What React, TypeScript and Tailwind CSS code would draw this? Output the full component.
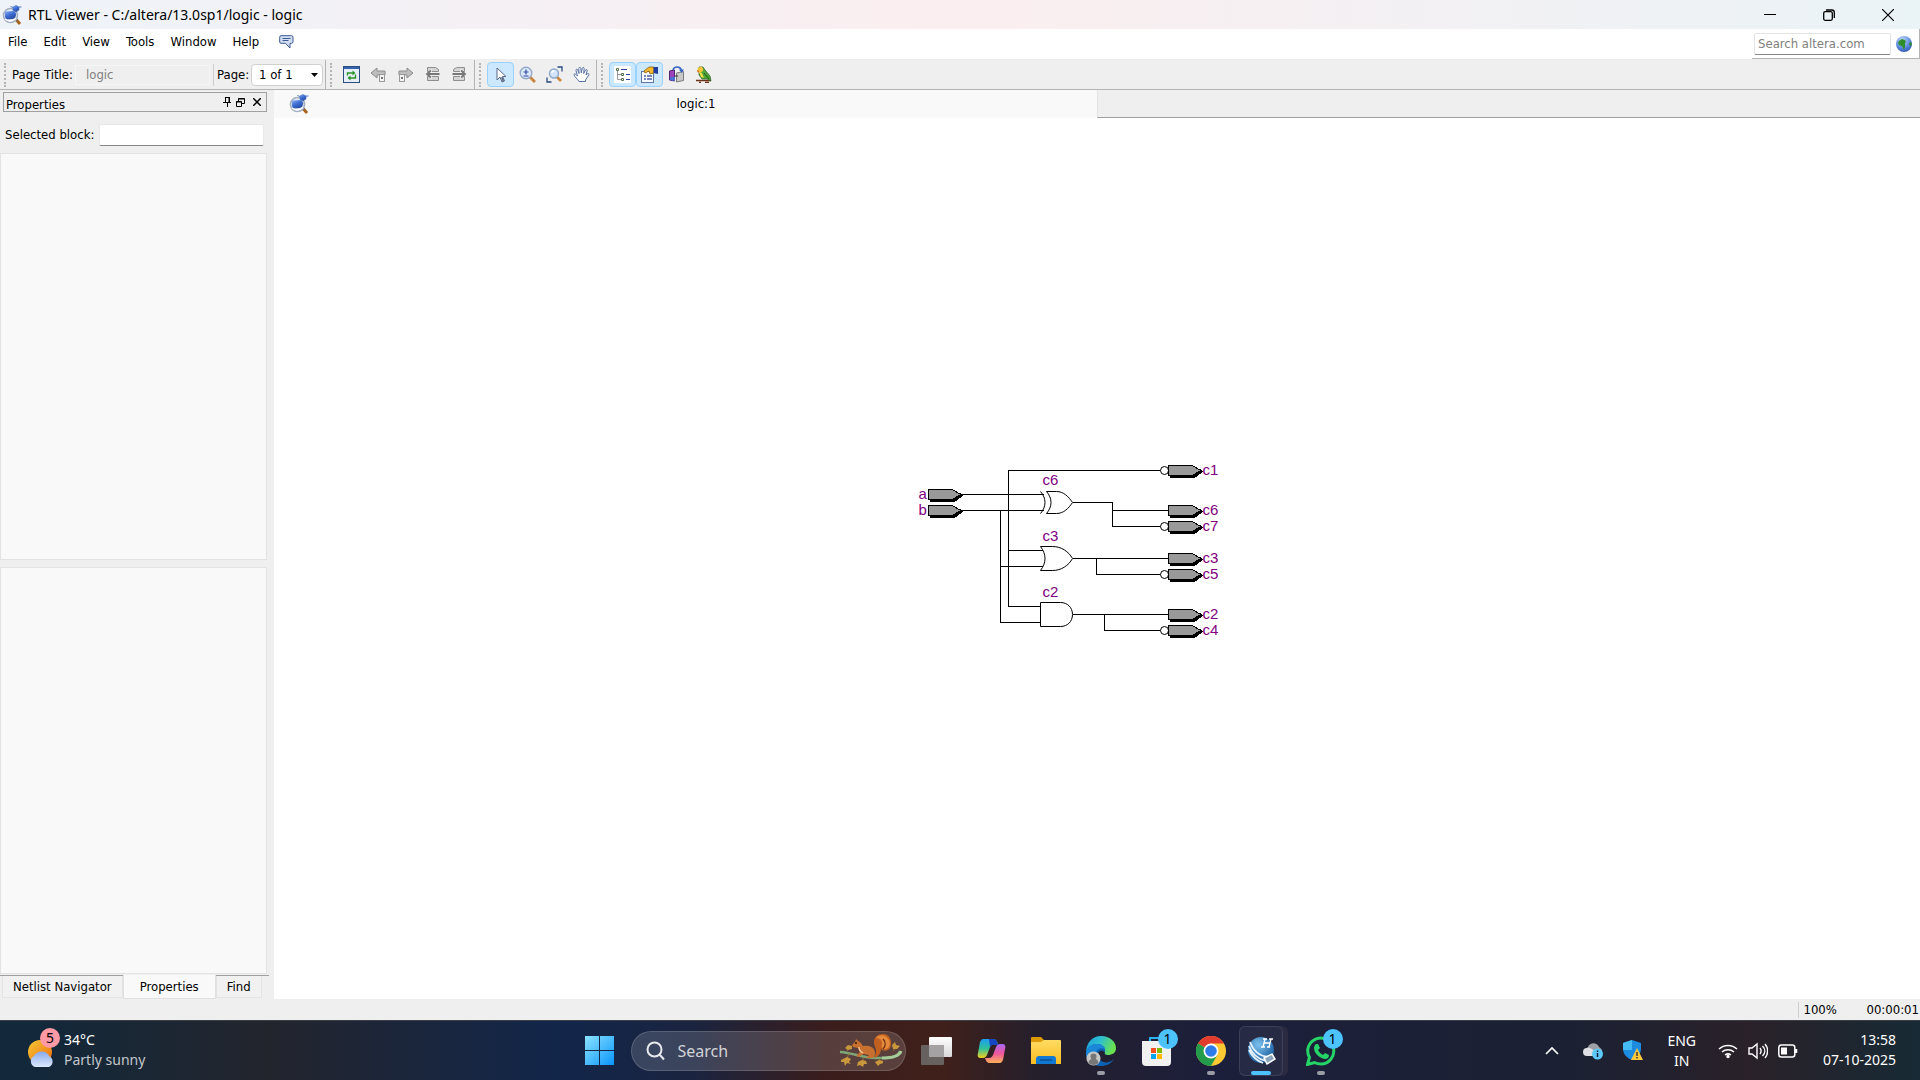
import React from "react";

type P = { children?: React.ReactNode; className?: string };

function AppLogo({ className }: P) {
  return (
    <svg className={className} width="20" height="20" viewBox="0 0 20 20" aria-hidden="true">
      <defs>
        <linearGradient id="logoBody" x2=".6" y2="1">
          <stop stopColor="#8fb4f5" />
          <stop offset=".5" stopColor="#3f6fd6" />
          <stop offset="1" stopColor="#274a9e" />
        </linearGradient>
      </defs>
      <path d="M14.500 15l3.500 4" stroke="#a8641e" strokeWidth="3" />
      <path d="M13.500 14l1.500 1.500" stroke="#5a5f6a" strokeWidth="2.600" />
      <circle cx="8.500" cy="10.500" r="7" fill="#e3ebf5" stroke="#a3afc0" strokeWidth="1.600" />
      <path d="M3 6.500l8-.5q3 .5 3 3.500t-3 4.500l-6 .500q-2-.5-2-3z" fill="url(#logoBody)" />
      <path d="M3 14q5 4 11-.5" fill="none" stroke="#fff" strokeWidth="1.500" />
      <path d="M11 2l3-1.500L17 2v3l-3 2-3-1.500z" fill="url(#logoBody)" stroke="#3f66b8" strokeWidth=".6" />
      <path d="M8.500 1.500l2.500 1M17 2h2.500" stroke="#4f79cc" />
    </svg>
  );
}

function Globe() {
  return (
    <svg width="16" height="16" viewBox="0 0 16 16" aria-hidden="true">
      <defs>
        <radialGradient id="globe" cx=".4" cy=".25" r=".8">
          <stop offset="0" stopColor="#c3d8fb" />
          <stop offset=".6" stopColor="#5e8be0" />
          <stop offset="1" stopColor="#2d55b0" />
        </radialGradient>
      </defs>
      <circle cx="8" cy="8" r="8" fill="url(#globe)" />
      <path d="M3 5l3-2 3 1 1 2-1 1v4l-1 3-2-4-3-1-1-2zM13 7l2-1 1 3-2 1z" fill="#2f8d2c" />
    </svg>
  );
}

function Grip() {
  return <span className="mx-1 h-6 w-0.5 shrink-0 border-l-2 border-dotted border-[#b4b4b4]" />;
}

function ToolButton({ children, label, active }: { children: React.ReactNode; label: string; active?: boolean }) {
  return (
    <button
      aria-label={label}
      aria-pressed={active}
      className={
        active
          ? "flex h-[25px] w-[27px] items-center justify-center rounded-sm border border-[#99d1ff] bg-[#cce8ff]"
          : "flex h-[25px] w-[27px] items-center justify-center"
      }
    >
      {children}
    </button>
  );
}

function Svg({ children }: P) {
  return (
    <svg width="17" height="17" viewBox="0 0 17 17" fill="none" aria-hidden="true">
      {children}
    </svg>
  );
}

function RefreshIcon() {
  return (
    <Svg>
      <rect x=".5" y=".5" width="16" height="16" fill="#e6eefa" stroke="#2c4d80" />
      <path d="M1 1h15v2H1z" fill="#3563ae" />
      <path d="M4.500 9.500V7H10M12.500 8.500V12H7" stroke="#2c9426" strokeWidth="1.400" />
      <path d="M9.500 4.500l3 2.500-3 2.500zM7.500 9.500l-3 2.500 3 2.500z" fill="#2c9426" />
    </Svg>
  );
}

function HierArrow({ right }: { right?: boolean }) {
  return (
    <Svg>
      <g transform={right ? "translate(17 0) scale(-1 1)" : undefined}>
        <path d="M1 7l6-5v3h8v4H7v3z" fill="#bdbdbd" stroke="#8c8c8c" />
        <rect x="9.500" y="8.500" width="5" height="7" fill="#f3f3f3" stroke="#9a9a9a" />
        <path d="M11 11h2v2h-2z" fill="#777" />
      </g>
    </Svg>
  );
}

function PageArrow({ right }: { right?: boolean }) {
  return (
    <Svg>
      <g transform={right ? "translate(17 0) scale(-1 1)" : undefined}>
        <path d="M3.500 1.500h8l3 2v2h-11zM3.500 10.500h11v4h-11z" fill="#d4d4d4" stroke="#8f8f8f" />
        <path d="M7 3.500v9" stroke="#f5f5f5" strokeWidth="2" />
        <path d="M15.500 8H3M7 4.500L3 8l4 3.500" stroke="#787878" strokeWidth="1.800" />
      </g>
    </Svg>
  );
}

function PointerIcon() {
  return (
    <Svg>
      <path d="M5 2v12l3-3 2 5 2.500-1-2-4.500H14z" fill="#fff" stroke="#5b6884" strokeWidth="1" />
      <path d="M9 11.500l1.500 4 1.500-.700-1.500-4" fill="#5d6a86" />
    </Svg>
  );
}

function ZoomIcon() {
  return (
    <Svg>
      <path d="M11 11l5 5" stroke="#c98642" strokeWidth="3" />
      <circle cx="7" cy="7" r="5.800" fill="#dce9fb" stroke="#93a9c9" strokeWidth="1.400" />
      <path d="M4.500 6h5M7 3.500v5M4.500 10h5" stroke="#2a4aa4" strokeWidth="1.200" />
    </Svg>
  );
}

function FitIcon() {
  return (
    <Svg>
      <path d="M11.500 1H16v4.500M1 11.500V16h4.500" stroke="#274a80" strokeWidth="1.300" />
      <path d="M11 11l4 4" stroke="#c98642" strokeWidth="2.600" />
      <circle cx="8" cy="7.500" r="4.500" fill="#d3e4fa" stroke="#8da6c9" strokeWidth="1.400" />
      <path d="M5.500 7a3 3 0 013-2" stroke="#fff" strokeWidth="1.400" />
    </Svg>
  );
}

function HandIcon() {
  return (
    <Svg>
      <path
        d="M6 15.500C4.500 13 2 11 1 9c-.4-1 1-1.500 2-.5L4.500 10 3 4.500C2.800 3 4.300 2.800 4.700 4L6 7.500 5.800 2.500c0-1.500 1.800-1.500 2 0L8.300 7l1-4.800c.4-1.200 2-.9 1.800.5L10.700 7.500 12.500 4c.6-1 2-.5 1.600.8L13 9l1.600-1.300c1-.6 1.800.3 1.200 1.200L12.500 14v1.500z"
        fill="#fff"
        stroke="#5871a4"
        strokeWidth="1"
      />
    </Svg>
  );
}

function TreeIcon() {
  return (
    <Svg>
      <path d="M0 0h17v17H0z" fill="#fff" />
      <path d="M3.500 5v8.500H8M3.500 8.500H8" stroke="#999" />
      <path d="M2.500 2.500h2v2h-2zM7.500 7.500h2v2h-2zM7.500 12.500h2v2h-2z" fill="#fff" stroke="#55704c" />
      <path d="M7 3.500h6M12 8.500h4M12 13.500h4" stroke="#2b3fa0" />
    </Svg>
  );
}

function PropsIcon() {
  return (
    <Svg>
      <rect x=".5" y="5.500" width="12" height="11" fill="#f5f8fd" stroke="#6077a6" />
      <path d="M3 10h2M6 10h5M3 13h2M6 13h5" stroke="#4c62a8" strokeWidth="1.300" />
      <path d="M3 5l5-4h5v6L9 8 8 5 4 7z" fill="#f8b92d" stroke="#86600d" strokeWidth=".8" />
      <path d="M12.500 1H17v7l-4.500-1z" fill="#1e3d9e" />
    </Svg>
  );
}

function NetlistIcon() {
  return (
    <Svg>
      <path d="M1.500 5l5-1v11l-5-1z" fill="#9a45bd" stroke="#51226f" />
      <path d="M2 11h5v4l-5-1z" fill="#4d6cd4" />
      <path d="M8.500 7l7-1.500v9l-7 1.500z" fill="#c8c8c8" stroke="#7c7c7c" />
      <path d="M5 4c1-4 7-4 8.500 0" stroke="#3565c2" strokeWidth="1.500" />
      <path d="M11 3.500h5L13.500 7z" fill="#3565c2" />
      <path d="M7 10h3" stroke="#333" />
    </Svg>
  );
}

function BirdIcon() {
  return (
    <Svg>
      <path d="M1 14.500h15M4 16.500h2M10 16.500h4" stroke="#6d3018" strokeWidth="1.300" />
      <path d="M4 1h4l2 3 5 6 1 5-4-2-5 0-3-4z" fill="#4fa53a" stroke="#27601c" strokeWidth=".7" />
      <path d="M3 2l3-1.500L8 2v3L5 7 2 5z" fill="#f2c53b" />
      <path d="M4 6l3 1 2 5-3-1z" fill="#eadb47" />
      <path d="M2 4l2 1-1 2z" fill="#d2531c" />
      <path d="M9 7l5 6" stroke="#1f5118" />
    </Svg>
  );
}

function TabButton({ children, active }: { children: string; active?: boolean }) {
  return (
    <button
      role="tab"
      aria-selected={!!active}
      className={
        active
          ? "-mt-px h-6 border border-t-0 border-[#e0e0e0] bg-[#f9f9f9] px-4"
          : "h-[22px] border border-t-0 border-[#e3e3e3] bg-[#f1f1f1] px-2.5"
      }
    >
      {children}
    </button>
  );
}

/* Netlist schematic */

const outputs = [
  { name: "c1", y: 470, inv: true },
  { name: "c6", y: 510, inv: false },
  { name: "c7", y: 526, inv: true },
  { name: "c3", y: 558, inv: false },
  { name: "c5", y: 574, inv: true },
  { name: "c2", y: 614, inv: false },
  { name: "c4", y: 630, inv: true },
];

function Pin({ x, y }: { x: number; y: number }) {
  return (
    <g>
      <path d={`M${x + 2} ${y + 7}h24l8 -6l-2 -2l-8 6H${x + 2}z`} fill="#000" stroke="#000" />
      <path d={`M${x} ${y - 5}h24l8 5l-8 5h-24z`} fill="#999" stroke="#000" />
    </g>
  );
}

function Schematic() {
  return (
    <svg
      width="394"
      height="217"
      viewBox="899.500 449.500 394 217"
      fill="none"
      stroke="#000"
      shapeRendering="crispEdges"
      role="img"
      aria-label="Schematic of logic"
      className="shrink-0"
    >
      <path d="M960 494h83M960 510h83M1160 470H1008v136h32M1000 510v112h40M1008 550h34M1000 566h42" />
      <path d="M1072 502h40v24h48M1112 510h56M1072 558h96M1096 558v16h64M1072 614h96M1104 614v16h56" />
      <g shapeRendering="auto" fill="#fff">
        <path d="M1046 491h10c7 0 12 5 16 11c-4 6-9 11-16 11h-10c6-7 6-15 0-22z" />
        <path d="M1040 491c6 7 6 15 0 22" fill="none" />
        <path d="M1040 546h12c9 0 16 5 20 12c-4 7-11 12-20 12h-12c6-8 6-16 0-24z" />
        <path d="M1040 602h20c7 0 12 5 12 12s-5 12-12 12h-20z" />
        {outputs.filter((o) => o.inv).map((o) => (
          <circle key={o.name} cx="1164" cy={o.y} r="4" />
        ))}
      </g>
      <Pin x={928} y={494} />
      <Pin x={928} y={510} />
      {outputs.map((o) => (
        <Pin key={o.name} x={1168} y={o.y} />
      ))}
      <g fill="#800080" stroke="none" className="font-['Liberation_Sans',sans-serif] text-[15px]">
        <text x="918" y="498">a</text>
        <text x="918" y="514">b</text>
        <text x="1042" y="484">c6</text>
        <text x="1042" y="540">c3</text>
        <text x="1042" y="596">c2</text>
        {outputs.map((o) => (
          <text key={o.name} x="1202" y={o.y + 4}>
            {o.name}
          </text>
        ))}
      </g>
    </svg>
  );
}

/* Taskbar */

function TaskButton({ children, label, run, badge }: { children: React.ReactNode; label: string; run?: boolean; badge?: string }) {
  return (
    <button aria-label={label} className="relative flex h-12 w-[55px] shrink-0 items-center justify-center">
      {children}
      {run && <span className="absolute bottom-0 h-1 w-2 rounded-full bg-[#9a9ca6]" />}
      {badge && (
        <span className="absolute top-0.5 right-1.5 flex size-5 items-center justify-center rounded-full bg-[#4cc2ff] text-sm text-black">
          {badge}
        </span>
      )}
    </button>
  );
}

function Squirrel() {
  return (
    <svg width="64" height="36" viewBox="0 0 64 36" fill="none" aria-hidden="true">
      <path d="M1 19c14 1 22 6 36 6 12 0 22 0 24-7" stroke="#7fa678" strokeWidth="2.500" />
      <path d="M43 25c9 0 17-1 19-7" stroke="#a5cb98" strokeWidth="3" />
      <path d="M10 20l-3 9M24 24v6M40 26l3 5M55 18v-6M8 18l2-4" stroke="#8b7a3a" />
      <path
        d="M2 27l4-2 2-1 4 2-2 3 2 2-4-1-2 3-1-4-3 0zM19 29l4-2 4 1 1 3-3 0-1 3-3-2-3 1zM36 29l4-2 4 1 0 2-3 1-2 2zM53 12l3-3 1 3 4 1-3 3-4 0zM6 15l3-3 4 1 0 3-4 1z"
        fill="#c9983d"
      />
      <path d="M36 22c3-5-1-8-1-13 0-5 4-8 9-8 7 0 10 8 7 14-3 4-7 3-9 1 0 4-2 7-6 9z" fill="#c2611f" />
      <path d="M37 5c3-4 10-4 13 2 2 5 0 9-4 9-3 0-4-2-3-5 0-4-2-6-6-6z" fill="#e58a3c" />
      <path d="M44 6c3 3 3 7 0 10" stroke="#6d2d10" strokeWidth="1.200" />
      <path d="M13 12l3-3 1-3 2 2c3 1 4 4 5 5 6-1 12 1 12 7 0 3-1 5-3 5h-6l3-3-6-1-4 3-3-1 4-4-2-4-5-1z" fill="#c8702f" />
      <path d="M20 14c0 3 2 5 4 6" stroke="#f0c294" strokeWidth="1.500" />
      <circle cx="17" cy="10" r=".9" fill="#1d0f06" />
    </svg>
  );
}

function Taskbar() {
  return (
    <footer className="flex h-15 items-center border-t border-[#3c4046] bg-[#1c1f3b] font-['Noto_Sans',sans-serif] text-white">
      <div className="flex h-full w-full items-center bg-[linear-gradient(90deg,#13283a_2%,#23252d_14%,#12264a_29%,#1a2440_36%,#3a1d1c_43%,#40201a_49%,#251f2c_54%,#1c1f3b_63%,#1b2133_82%,#2a2129_91%,#172a35_100%)]">
        <button className="flex flex-1 items-center gap-1.5 pl-6 text-left">
          <span className="relative">
            <svg width="34" height="38" viewBox="0 0 34 38" aria-hidden="true">
              <defs>
                <linearGradient id="sun" x2="1" y2="1">
                  <stop stopColor="#f6c934" />
                  <stop offset="1" stopColor="#ee6a10" />
                </linearGradient>
                <linearGradient id="cloud" x2="0" y2="1">
                  <stop stopColor="#87aaee" />
                  <stop offset="1" stopColor="#dce9fc" />
                </linearGradient>
              </defs>
              <circle cx="16" cy="20" r="12" fill="url(#sun)" />
              <path d="M11 35a6 6 0 01-1-11c3-6 13-6 15 0a6 6 0 010 11z" fill="url(#cloud)" />
            </svg>
            <span className="absolute -top-1 left-4 flex size-5 items-center justify-center rounded-full bg-[#ff99a4] text-sm text-black">5</span>
          </span>
          <span className="flex flex-col pb-0.5 text-sm leading-5">
            <span>34°C</span>
            <span className="text-[#c3c6cb]">Partly sunny</span>
          </span>
        </button>

        <div className="flex shrink-0 items-center">
          <TaskButton label="Start">
            <svg width="29" height="29" viewBox="0 0 29 29" aria-hidden="true">
              <defs>
                <linearGradient id="win" x2="1" y2="1">
                  <stop stopColor="#8be3ff" />
                  <stop offset="1" stopColor="#0a95fb" />
                </linearGradient>
              </defs>
              <path d="M0 0h14v14H0zM15 0h14v14H15zM0 15h14v14H0zM15 15h14v14H15z" fill="url(#win)" />
            </svg>
          </TaskButton>
          <label className="ml-1 flex h-10 w-[275px] items-center rounded-full border border-white/15 bg-white/15 pl-3.5 pr-0.5">
            <svg width="20" height="20" viewBox="0 0 20 20" fill="none" stroke="#e8e9ec" strokeWidth="2" aria-hidden="true">
              <circle cx="8.500" cy="8.500" r="7" />
              <path d="M13.500 13.500l4.500 5" />
            </svg>
            <input aria-label="Search" placeholder="Search" className="ml-3 min-w-0 flex-1 bg-transparent text-base text-white outline-none placeholder:text-[#d3d4d8]" />
            <Squirrel />
          </label>
          <span className="w-[3px]" />
          <TaskButton label="Task view">
            <svg width="31" height="28" viewBox="0 0 31 28" aria-hidden="true">
              <defs>
                <linearGradient id="tv" x2="0" y2="1">
                  <stop stopColor="#fff" />
                  <stop offset="1" stopColor="#d8d8d8" />
                </linearGradient>
              </defs>
              <rect x="8" y="0" width="23" height="20" rx="1" fill="url(#tv)" />
              <rect x="0" y="8" width="23" height="20" rx="1" fill="#6f6d6d" fillOpacity=".85" />
              <path d="M8 8h15v12H8z" fill="#a4a2a2" />
            </svg>
          </TaskButton>
          <TaskButton label="Copilot">
            <svg width="29" height="26" viewBox="0 0 29 26" aria-hidden="true">
              <defs>
                <linearGradient id="cp1" x2="0" y2="1">
                  <stop stopColor="#1b9df2" />
                  <stop offset=".5" stopColor="#2fc19a" />
                  <stop offset="1" stopColor="#f4d01c" />
                </linearGradient>
                <linearGradient id="cp2" x2="0" y2="1">
                  <stop stopColor="#a968f4" />
                  <stop offset=".5" stopColor="#f0569a" />
                  <stop offset="1" stopColor="#fbb05b" />
                </linearGradient>
              </defs>
              <path d="M6 1h10c3 0 4 2 5 5h-4c-2 0-3 1-4 3l-3 8c-1 2-2 3-4 3H4c-3 0-4-2-3-5L3 4c1-2 2-3 3-3z" fill="url(#cp1)" />
              <path d="M12 1h4c3 0 4 2 5 6h-4c-2 0-3 0-4 2z" fill="#1746c4" />
              <path d="M23 25H13c-3 0-4-2-5-5h4c2 0 3-1 4-3l3-8c1-2 2-3 4-3h2c3 0 4 2 3 5l-2 11c-1 2-2 3-3 3z" fill="url(#cp2)" />
            </svg>
          </TaskButton>
          <TaskButton label="File Explorer">
            <svg width="30" height="27" viewBox="0 0 30 27" aria-hidden="true">
              <defs>
                <linearGradient id="fe" x2="0" y2="1">
                  <stop stopColor="#ffdc63" />
                  <stop offset="1" stopColor="#f9bc22" />
                </linearGradient>
              </defs>
              <path d="M0 1q0-1 1-1h9l3 3v5H0z" fill="#dc9a08" />
              <path d="M0 5h10l3-2h16q1 0 1 1v23H0z" fill="url(#fe)" />
              <path d="M5 27v-5q0-3 3-3h14q3 0 3 3v5z" fill="#1279d2" />
              <path d="M9 23h12" stroke="#0b4f99" strokeWidth="1.500" />
            </svg>
          </TaskButton>
          <TaskButton label="Edge" run>
            <svg width="30" height="30" viewBox="0 0 30 30" aria-hidden="true">
              <defs>
                <linearGradient id="ed" x2="1" y2=".3">
                  <stop stopColor="#1d9fdd" />
                  <stop offset=".5" stopColor="#2cbfd0" />
                  <stop offset="1" stopColor="#69e052" />
                </linearGradient>
              </defs>
              <path d="M15 0c9 0 15 6 15 12 0 5-4 7-8 7-3 0-4-1-3-3 0-4-3-7-8-7-6 0-10 3-11 8C0 7 6 0 15 0z" fill="url(#ed)" />
              <path d="M0 17C1 11 6 8 11 8c5 0 9 3 8 8-6-4-9 2-6 7 4 5 11 4 15 0-3 5-8 7-13 7C7 30 0 25 0 17z" fill="#0e62b4" />
              <path d="M0 17C1 11 6 8 11 8c4 0 7 2 8 5-8-3-13 5-7 16C5 28 0 23 0 17z" fill="#1b87d8" />
              <circle cx="7.500" cy="22.500" r="7" fill="#c7c7c7" />
              <circle cx="7.500" cy="20.500" r="3" fill="#777" />
              <path d="M2.500 27a5 4.500 0 0110 0 7 7 0 01-10 0z" fill="#777" />
            </svg>
          </TaskButton>
          <TaskButton label="Microsoft Store" badge="1">
            <svg width="29" height="30" viewBox="0 0 29 30" aria-hidden="true">
              <path d="M8 7V2h13v5" fill="none" stroke="#28b3ec" strokeWidth="2" />
              <path d="M0 5h29v21q0 4-4 4H4q-4 0-4-4z" fill="#f1f1f1" />
              <path d="M9 12h5v5H9z" fill="#f25022" />
              <path d="M15 12h5v5h-5z" fill="#7fba00" />
              <path d="M9 18h5v5H9z" fill="#00a4ef" />
              <path d="M15 18h5v5h-5z" fill="#ffb900" />
            </svg>
          </TaskButton>
          <TaskButton label="Chrome" run>
            <svg width="30" height="30" viewBox="0 0 30 30" aria-hidden="true">
              <circle cx="15" cy="15" r="15" fill="#fcc934" />
              <path d="M15 15L2 7.500A15 15 0 0128 7.500H15z" fill="#e33b2e" />
              <path d="M2 7.500A15 15 0 0015 30l6.500-11.500L15 15z" fill="#229c4b" />
              <circle cx="15" cy="15" r="7.500" fill="#fff" />
              <circle cx="15" cy="15" r="5.800" fill="#2f7ce8" />
            </svg>
          </TaskButton>
          <button aria-label="Quartus II" className="relative flex h-[50px] w-[44px] shrink-0 items-center justify-center rounded-md border border-white/10 bg-white/5 shadow-[5px_0_0_#2a2b40]">
            <svg width="30" height="30" viewBox="0 0 30 30" aria-hidden="true">
              <defs>
                <radialGradient id="qt" cx=".4" cy=".3" r=".8">
                  <stop stopColor="#7cc2ee" />
                  <stop offset="1" stopColor="#0b4f94" />
                </radialGradient>
              </defs>
              <circle cx="15" cy="14" r="13" fill="url(#qt)" />
              <path d="M3 10c3 8 9 13 17 15M3 14c3 6 8 11 14 13M4 6c3 8 9 14 18 15" fill="none" stroke="#e4f1fb" strokeWidth="1.800" />
              <path d="M18 22l8-4 3 5-8 5z" fill="#8aa4be" stroke="#fff" strokeWidth="1.500" />
              <path d="M17 3h4M23 3h4M15 11h4M21 11h3M19 3l-2 8M25 3l-2 8M18 7h6" stroke="#fff" strokeWidth="1.300" />
            </svg>
            <span className="absolute bottom-0 h-1 w-5 rounded-full bg-[#4cc2ff]" />
          </button>
          <span className="w-[11px]" />
          <TaskButton label="WhatsApp" run badge="1">
            <svg width="30" height="30" viewBox="0 0 30 30" aria-hidden="true">
              <path d="M1.500 28.500l2-7A13 13 0 1115 28c-2.500 0-4.500-.5-6.500-1.500z" fill="none" stroke="#25d366" strokeWidth="3" />
              <path d="M10 8l2 0 2 4-2 2c1 2 3 4 5 5l2-2 4 2c0 3-2 4-4 4-6-1-11-6-11-11 0-2 1-3 2-4z" fill="#25d366" />
            </svg>
          </TaskButton>
        </div>

        <div className="flex flex-1 items-center justify-end pr-6 text-sm leading-5">
          <button aria-label="Show hidden icons" className="mr-6">
            <svg width="14" height="9" viewBox="0 0 14 9" fill="none" stroke="#fff" strokeWidth="1.600"><path d="M1 8l6-6 6 6" /></svg>
          </button>
          <svg className="mr-5" width="20" height="18" viewBox="0 0 20 18" aria-hidden="true">
            <path d="M5 13a4.500 4.500 0 010-8c2-5 9-5 11 0 2 1 3 3 3 4l-4 4z" fill="#9da0a6" />
            <path d="M4 14a4 4 0 010-8c3-1 5 1 7 3l2 5z" fill="#dddfe2" />
            <circle cx="14.500" cy="12" r="5.500" fill="#5cc9fa" />
            <path d="M14.500 11v4M14.500 8.500v1.500" stroke="#10253a" strokeWidth="1.500" />
          </svg>
          <svg className="mr-6" width="20" height="21" viewBox="0 0 20 21" aria-hidden="true">
            <path d="M9 0l9 3v6c0 5-4 9-9 11C4 18 0 14 0 9V3z" fill="#1d8ce0" />
            <path d="M9 0v10H0V3z" fill="#45bbf3" />
            <path d="M14 8l6 12H8z" fill="#ffc83d" />
            <path d="M14 12v4M14 17v1.500" stroke="#222" strokeWidth="1.300" />
          </svg>
          <button className="mr-[22px] text-center">ENG<br />IN</button>
          <svg className="mr-2.5" width="20" height="16" viewBox="0 0 20 16" fill="none" stroke="#fff" strokeWidth="1.500" aria-hidden="true">
            <path d="M1 6a13 13 0 0118 0M4 9a9 9 0 0112 0M7 12a5 5 0 016 0" />
            <circle cx="10" cy="13.500" r="1" fill="#fff" />
          </svg>
          <svg className="mr-2.5" width="20" height="18" viewBox="0 0 20 18" fill="none" stroke="#fff" strokeWidth="1.400" aria-hidden="true">
            <path d="M1 6h3l5-4v14l-5-4H1z" />
            <path d="M12 6c1.500 2 1.500 4 0 6M14.500 4c3 3 3 7 0 10M17 2c3.500 4 3.500 10 0 14" />
          </svg>
          <svg className="mr-5" width="20" height="14" viewBox="0 0 20 14" aria-hidden="true">
            <rect x=".8" y="1" width="16" height="12" rx="2.500" fill="none" stroke="#fff" strokeWidth="1.500" />
            <rect x="3" y="3.500" width="6" height="7" fill="#fff" />
            <path d="M18 5v4" stroke="#fff" strokeWidth="2.500" />
          </svg>
          <button className="min-w-[78px] pb-0.5 text-right">13:58<br />07-10-2025</button>
        </div>
      </div>
    </footer>
  );
}

export default function App() {
  return (
    <div className="flex min-h-screen flex-col bg-[#efefef] font-['DejaVu_Sans_Condensed','Noto_Sans',sans-serif] text-[13px] leading-4 text-black">
      <header className="flex h-[29px] items-center bg-linear-to-r from-[#eef3f9] via-[#fbeef0] to-[#eaf3f6] pl-0.5">
        <AppLogo className="shrink-0" />
        <h1 className="ml-1.5 flex-1 font-['Noto_Sans',sans-serif] text-sm">RTL Viewer - C:/altera/13.0sp1/logic - logic</h1>
        <div className="flex h-full items-center gap-[47px] pr-[26px]">
          <button aria-label="Minimize">
            <svg width="12" height="12" stroke="#000"><path d="M0 5.500h12" /></svg>
          </button>
          <button aria-label="Restore">
            <svg width="12" height="12" fill="none" stroke="#000" strokeWidth="1.300"><rect x=".7" y="2.700" width="8.600" height="8.600" rx="1.500" /><path d="M3 1h6q2.300 0 2.300 2.300V9" /></svg>
          </button>
          <button aria-label="Close">
            <svg width="12" height="12" stroke="#000" strokeWidth="1.200"><path d="M0 0l12 12M12 0L0 12" /></svg>
          </button>
        </div>
      </header>

      <div className="flex h-[31px] justify-between border-b border-[#ededed] bg-white">
        <nav className="flex h-[25px] items-center gap-4 pl-2">
          {["File", "Edit", "View", "Tools", "Window", "Help"].map((m) => (
            <button key={m}>{m}</button>
          ))}
          <button aria-label="Feedback" className="ml-1">
            <svg width="15" height="14" viewBox="0 0 15 14" aria-hidden="true">
              <path d="M2 .7h10.500q1.500 0 1.500 1.500v4.600q0 1.500-1.500 1.500H11V13L6.500 8.300H2Q.7 8.300.7 7V2.200Q.7.7 2 .7z" fill="#d3def3" stroke="#3c5a92" />
              <path d="M3.500 3.500h8M3.500 5.500h6" stroke="#3c5a92" />
            </svg>
          </button>
        </nav>
        <div className="flex items-center gap-[5px] border-r border-b border-[#b4b4b4] pr-[7px] pl-0.5">
          <input aria-label="Search altera.com" placeholder="Search altera.com" className="h-[22px] w-[137px] rounded-xs border border-[#e3e3e3] border-b-[#868686] bg-white px-[3px] placeholder:text-[#808080]" />
          <button aria-label="Search the web"><Globe /></button>
        </div>
      </div>

      <div className="flex h-[30px] items-center border-b border-[#b4b4b4]">
        <div className="flex h-full w-[326px] items-center border-r border-[#b4b4b4]">
          <Grip />
          <label className="flex flex-1 items-center">
            <span className="ml-0.5 w-[63px] whitespace-nowrap">Page Title:</span>
            <input readOnly value="logic" className="h-5 w-[135px] border border-[#f6f6f6] bg-transparent px-2.5 text-[#808080]" />
          </label>
          <label className="flex items-center border-l border-[#cfcfcf] pl-[3px]">
            <span className="w-[34px] whitespace-nowrap">Page:</span>
            <span className="relative mr-0.5 flex items-center">
              <select className="h-[22px] w-[72px] appearance-none rounded-sm border border-[#d0d0d0] bg-white px-[7px]">
                <option>1 of 1</option>
              </select>
              <svg className="pointer-events-none absolute right-[5px]" width="7" height="4" aria-hidden="true"><path d="M0 0h7L3.500 4z" /></svg>
            </span>
          </label>
        </div>
        <div className="flex h-full w-[149px] items-center border-r border-[#b4b4b4]">
          <Grip />
          <div className="ml-0.5 flex">
            <ToolButton label="Refresh"><RefreshIcon /></ToolButton>
            <ToolButton label="Back"><HierArrow /></ToolButton>
            <ToolButton label="Forward"><HierArrow right /></ToolButton>
            <ToolButton label="Previous page"><PageArrow /></ToolButton>
            <ToolButton label="Next page"><PageArrow right /></ToolButton>
          </div>
        </div>
        <div className="flex h-full w-[122px] items-center border-r border-[#b4b4b4]">
          <Grip />
          <div className="ml-0.5 flex">
            <ToolButton label="Selection tool" active><PointerIcon /></ToolButton>
            <ToolButton label="Zoom tool"><ZoomIcon /></ToolButton>
            <ToolButton label="Fit in window"><FitIcon /></ToolButton>
            <ToolButton label="Hand tool"><HandIcon /></ToolButton>
          </div>
        </div>
        <Grip />
        <div className="ml-0.5 flex">
          <ToolButton label="Netlist navigator" active><TreeIcon /></ToolButton>
          <ToolButton label="Properties" active><PropsIcon /></ToolButton>
          <ToolButton label="Partition"><NetlistIcon /></ToolButton>
          <ToolButton label="Bird's eye view"><BirdIcon /></ToolButton>
        </div>
      </div>

      <div className="flex flex-1">
        <aside className="flex w-[274px] shrink-0 flex-col pr-[5px]">
          <div className="mt-0.5 mr-0.5 ml-[3px] flex h-5 items-center border border-[#a0a0a0] pr-[5px] pl-0.5">
            <h2 className="flex-1 pt-1.5">Properties</h2>
            <div className="flex items-center gap-1">
              <button aria-label="Pin"><svg width="9" height="10" fill="none" stroke="#000"><path d="M2.500 0v5.500M6.500 0v5.500M2 .5h5M0 5.500h8M4.500 6v4" /><path d="M6 0v5" /></svg></button>
              <button aria-label="Float"><svg width="9" height="9" fill="none" stroke="#000"><path d="M2.500 3V.5h6v5H6M2 1h7M.5 3.500h5v5h-5zM0 4h6" /></svg></button>
              <button aria-label="Close panel" className="ml-1"><svg width="8" height="8" stroke="#000" strokeWidth="1.500"><path d="M0 0l8 8M8 0L0 8" /></svg></button>
            </div>
          </div>
          <label className="mt-3 flex items-center pr-[5px] pl-[5px]">
            <span className="w-[94px] whitespace-nowrap">Selected block:</span>
            <input className="h-[22px] min-w-0 flex-1 rounded-xs border border-[#e8e8e8] border-b-[#868686] bg-white px-1" />
          </label>
          <div className="mt-[7px] mr-0.5 flex-1 border border-[#e3e3e3] bg-[#f9f9f9]" />
          <div className="mt-[7px] mr-0.5 flex-1 border border-[#e3e3e3] bg-[#f9f9f9]" />
          <div role="tablist" className="mt-px flex h-6 items-start border-t border-[#a0a0a0] pl-0.5">
            <TabButton>Netlist Navigator</TabButton>
            <TabButton active>Properties</TabButton>
            <TabButton>Find</TabButton>
          </div>
        </aside>
        <main className="flex flex-1 flex-col">
          <div role="tablist" className="flex h-7">
            <button role="tab" aria-selected="true" className="flex w-1/2 items-center bg-[#f9f9f9]">
              <AppLogo className="ml-[15px]" />
              <span className="flex-1 pr-3.5 text-center">logic:1</span>
            </button>
            <div className="flex-1 border-b border-l border-[#a0a0a0] border-l-[#e3e3e3]" />
          </div>
          <div className="flex flex-1 items-center justify-center bg-white">
            <Schematic />
          </div>
        </main>
      </div>

      <div className="flex h-[21px] items-center justify-end">
        <span className="h-4 w-[68px] border-l border-[#cfcfcf] pl-1">100%</span>
        <span className="pr-px">00:00:01</span>
      </div>

      <Taskbar />
    </div>
  );
}
